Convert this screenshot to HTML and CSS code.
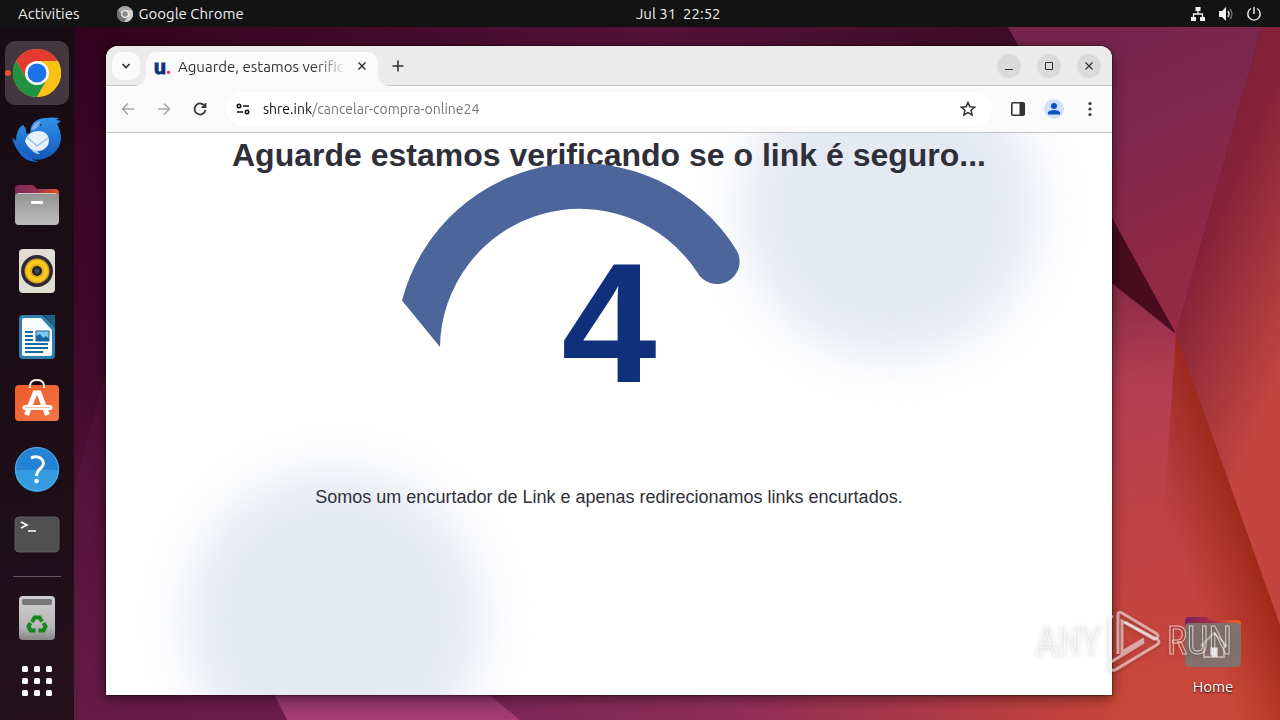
FILE: index.html
```html
<!DOCTYPE html>
<html lang="pt">
<head>
<meta charset="utf-8">
<meta name="viewport" content="width=device-width, initial-scale=1">
<title>Aguarde, estamos verificando</title>
<link rel="stylesheet" href="styles.css">
</head>
<body>
<svg class="wallpaper" viewBox="0 0 1280 720" preserveAspectRatio="none" aria-hidden="true">
  <defs>
    <linearGradient id="base" gradientUnits="userSpaceOnUse" x1="74" y1="0" x2="250" y2="720"><stop offset="0" stop-color="#31021f"/><stop offset=".5" stop-color="#430a2c"/><stop offset="1" stop-color="#74214f"/></linearGradient>
    <linearGradient id="top" x1="0" x2="1"><stop offset="0" stop-color="#33031f"/><stop offset=".55" stop-color="#541239"/><stop offset="1" stop-color="#380a24"/></linearGradient>
    <linearGradient id="plum" gradientUnits="userSpaceOnUse" x1="1100" y1="60" x2="1220" y2="330"><stop offset="0" stop-color="#77254f"/><stop offset="1" stop-color="#992b42"/></linearGradient>
    <linearGradient id="ember" gradientUnits="userSpaceOnUse" x1="1195" y1="260" x2="1310" y2="310"><stop offset="0" stop-color="#842239"/><stop offset="1" stop-color="#c24540"/></linearGradient>
    <linearGradient id="rose" gradientUnits="userSpaceOnUse" x1="1130" y1="290" x2="1150" y2="700"><stop offset="0" stop-color="#8d2c49"/><stop offset=".22" stop-color="#b43d50"/><stop offset="1" stop-color="#ca4839"/></linearGradient>
    <linearGradient id="fold" gradientUnits="userSpaceOnUse" x1="1182" y1="565" x2="1250" y2="541"><stop offset="0" stop-color="#9d2815" stop-opacity="0"/><stop offset="1" stop-color="#98240f" stop-opacity=".8"/></linearGradient>
    <linearGradient id="floor" x1="0" x2="1"><stop offset="0" stop-color="#7b2657"/><stop offset=".4" stop-color="#902e58"/><stop offset="1" stop-color="#c94539"/></linearGradient>
    <linearGradient id="pink" x1="0" y1="0" x2="0" y2="1"><stop offset="0" stop-color="#883066"/><stop offset="1" stop-color="#a43c75"/></linearGradient>
  </defs>
  <path fill="url(#base)" d="M0 0h1280v720H0z"/>
  <path fill="url(#top)" d="M106 27h1000v19H106z"/>
  <path fill="#5a1640" opacity=".4" d="M106 370 74 490v230h213v-40H106z"/>
  <path fill="url(#plum)" d="M1008 27h254l-86 307-64-116z"/>
  <path fill="url(#ember)" d="M1262 27h18v600l-104-293z"/>
  <path fill="#480c1c" d="M1112 218l64 116-64-51z"/>
  <path fill="url(#rose)" d="M1100 274l76 60 104 291v95h-180z"/>
  <path fill="url(#fold)" d="M1176 334l104 291v95h-130z"/>
  <path fill="url(#floor)" d="M490 695h622v25H520z"/>
  <path fill="url(#pink)" d="M267 680h205l48 40H287z"/>
</svg>

<header class="topbar">
  <div class="topbar-left">
    <button class="plain" type="button">Activities</button>
    <button class="plain app-menu" type="button">
      <svg width="16" height="16" viewBox="0 0 16 16" aria-hidden="true"><circle cx="8" cy="8" r="8" fill="#a8a8a8"/><path fill="#747474" d="M1 4a8 8 0 0 0 6 12l3-6-5-1z"/><path fill="#d0d0d0" d="M8 4h7a8 8 0 0 1-7 12l3-5z"/><circle cx="8" cy="8" r="3.4" fill="#888" stroke="#f0f0f0" stroke-width="1.2"/></svg>
      Google Chrome
    </button>
  </div>
  <button class="plain clock" type="button">Jul 31&nbsp; 22:52</button>
  <button class="plain status" type="button" aria-label="System">
    <svg width="16" height="16" viewBox="0 0 16 16" fill="#f2f2f2"><path d="M5.500 1h5v4h-5zM1 11h5v4H1zM10 11h5v4h-5z"/><path d="M8 5v3M3.500 11V8h9v3" fill="none" stroke="#f2f2f2" stroke-width="1.300"/></svg>
    <svg width="16" height="16" viewBox="0 0 16 16" fill="#f2f2f2"><path d="M1 5h3l4-4v14l-4-4H1z"/><path d="M10 5q2 3 0 6" fill="none" stroke="#ddd" stroke-width="1.400"/><path d="M12 3q4 5 0 10" fill="none" stroke="#777" stroke-width="1.300"/></svg>
    <svg width="16" height="16" viewBox="0 0 16 16" fill="none" stroke="#f2f2f2" stroke-width="1.400"><path d="M8 1v7M5 2.500a6.200 6.200 0 1 0 6 0"/></svg>
  </button>
</header>

<div class="workspace">
  <nav class="dock" aria-label="Dock">
    <button class="launcher active" type="button" aria-label="Google Chrome">
      <svg width="48" height="48" viewBox="0 0 48 48"><circle cx="24" cy="24" r="24" fill="#fbc116"/><path fill="#e33b2e" d="M3.200 12A24 24 0 0 1 44.800 12H24L13.600 30z"/><path fill="#229342" d="M3.200 12A24 24 0 0 0 24 48l10.400-18-20.800 0z"/><path fill="#fbc116" d="M24 12h20.800A24 24 0 0 1 24 48l10.400-18z"/><circle cx="24" cy="24" r="12" fill="#fff"/><circle cx="24" cy="24" r="9.500" fill="#1a73e8"/></svg>
    </button>
    <button class="launcher" type="button" aria-label="Thunderbird">
      <svg width="50" height="48" viewBox="0 -2 50 48"><defs><linearGradient id="tb" x1="0" y1="0" x2="0" y2="1"><stop offset="0" stop-color="#3193ea"/><stop offset="1" stop-color="#1458bb"/></linearGradient></defs><path fill="url(#tb)" d="M1 21q1 1 3 3 0-12 7-16 4 3 3 8l4 1q0-15 15-16 6-1 14 0l-3 2 5 1-4 3q4 6 4 15a24 23 0 0 1-47 4Q0 25 1 21z"/><path d="M8 26q4 15 19 19-14 1-21-11z" fill="#1a66ca"/><path fill="#8fb0e6" d="M19 13q3-8 10-9l-2 3q-2 6-8 6z"/><path fill="#e6f1fc" d="M13 24q3-10 13-10t11 9q0 9-10 11-11 0-14-10z"/><path d="M15 20l10 9 11-8" fill="none" stroke="#9dbfe2" stroke-width="1.500"/><path fill="#b4d6f8" d="M19 32q3 5 9 5-3-2-3-4z"/><circle cx="29" cy="8" r="1" fill="#123a7a"/></svg>
    </button>
    <button class="launcher" type="button" aria-label="Files">
      <svg width="46" height="42" viewBox="0 0 46 42"><defs><linearGradient id="fl"><stop offset="0" stop-color="#7b2a5c"/><stop offset=".5" stop-color="#9a3050"/><stop offset="1" stop-color="#e95420"/></linearGradient><linearGradient id="fg" x1="0" y1="0" x2="0" y2="1"><stop offset="0" stop-color="#929292"/><stop offset="1" stop-color="#bcbcbc"/></linearGradient></defs><path fill="url(#fl)" d="M1 5q0-4 4-4h13q2 0 3 2t3 2h17q4 0 4 4v8H1z"/><rect x="1" y="9" width="44" height="32" rx="4" fill="url(#fg)"/><path d="M4 9.500h38" stroke="#c4c4c4"/><rect x="17" y="17" width="12" height="3" rx="1" fill="#fff"/></svg>
    </button>
    <button class="launcher" type="button" aria-label="Rhythmbox">
      <svg width="38" height="46" viewBox="0 0 38 46"><rect x="1" y="1" width="36" height="44" rx="4" fill="#e2ddd3"/><circle cx="19" cy="23" r="16" fill="#2c2a38"/><circle cx="19" cy="23" r="12.500" fill="#d6a21f"/><circle cx="19" cy="23" r="11" fill="#f9c91e"/><circle cx="19" cy="23" r="7" fill="#e5ae13"/><circle cx="19" cy="23" r="5" fill="#21242b"/><circle cx="19" cy="23" r="2.500" fill="#454b58"/></svg>
    </button>
    <button class="launcher" type="button" aria-label="LibreOffice Writer">
      <svg width="38" height="46" viewBox="0 0 38 46"><path fill="#2f7fae" d="M5 1h20l12 12v28q0 4-4 4H5q-4 0-4-4V5q0-4 4-4z"/><path fill="#f8fbfc" d="M6 4h17l11 12v24q0 2-2 2H6q-2 0-2-2V6q0-2 2-2z"/><path fill="#22618c" d="M26 1h11v12z"/><path d="M7 18h8M7 22h8M7 26h8M7 30h23M7 34h23M7 38h18" stroke="#1769a0" stroke-width="2"/><rect x="18" y="17" width="13" height="10" fill="#80c8f0" stroke="#1769a0"/><path d="M18 27v-5l4-2 3 4 3-2 3 3v2z" fill="#17649b"/></svg>
    </button>
    <button class="launcher software" type="button" aria-label="Ubuntu Software">
      <svg width="46" height="44" viewBox="0 0 46 44"><defs><linearGradient id="sw" x1="0" y1="0" x2="1" y2="1"><stop offset="0" stop-color="#f05a24"/><stop offset="1" stop-color="#f17648"/></linearGradient></defs><rect x="1" y="7" width="44" height="36" rx="4" fill="url(#sw)"/><path d="M16 10V7q1-5 7-5t7 5v3" fill="none" stroke="#fbeee4" stroke-width="2"/><path d="M12.500 37l8.500-22h4l8.500 22" fill="none" stroke="#fff" stroke-width="5"/><path d="M11 29.500h25" stroke="#fff" stroke-width="5" stroke-linecap="round"/><path d="M11 29.500h25" stroke="#f6ac8c" stroke-width=".8"/></svg>
    </button>
    <button class="launcher" type="button" aria-label="Help">
      <svg width="46" height="46" viewBox="0 0 46 46"><circle cx="23" cy="23" r="22" fill="#2382d3"/><path fill="#349be0" d="M1 24h44a22 22 0 0 1-44 0z"/><circle cx="23" cy="23" r="21.500" fill="none" stroke="#52ade9"/><path d="M17 12q6-2.500 10 .5 5 4.500 0 9.500-4 3-4.500 8" fill="none" stroke="#fff" stroke-width="3"/><circle cx="22.500" cy="35" r="2.300" fill="#fff"/></svg>
    </button>
    <button class="launcher" type="button" aria-label="Terminal">
      <svg width="46" height="38" viewBox="0 0 46 38"><rect x="1" y="1" width="44" height="35" rx="4" fill="#505050" stroke="#5c5c5c"/><path d="M7 6l6 3-6 3M14 15h8" fill="none" stroke="#fff" stroke-width="1.600"/></svg>
    </button>
    <hr class="dock-rule">
    <button class="launcher" type="button" aria-label="Trash">
      <svg width="38" height="46" viewBox="0 0 38 46"><defs><linearGradient id="tr" x1="0" y1="0" x2="0" y2="1"><stop offset="0" stop-color="#cecece"/><stop offset=".7" stop-color="#b7b7b7"/><stop offset="1" stop-color="#858585"/></linearGradient></defs><rect x="1" y="1" width="36" height="44" rx="4" fill="url(#tr)"/><rect x="4" y="4" width="30" height="6" rx="2" fill="#777"/><g fill="none" stroke="#16871e" stroke-width="4"><path d="M14 27l2.500-4.500h5l2.500 4"/><path d="M25.500 28l2 3.500-2 4h-5"/><path d="M17.500 35.500h-5l-2-4 2-3.500"/></g></svg>
    </button>
    <button class="launcher apps" type="button" aria-label="Show Applications">
      <svg width="30" height="30" viewBox="0 0 30 30" fill="#fff"><g id="dots"><rect width="6" height="6" rx="1.500"/><rect x="12" width="6" height="6" rx="1.500"/><rect x="24" width="6" height="6" rx="1.500"/></g><use href="#dots" y="12"/><use href="#dots" y="24"/></svg>
    </button>
  </nav>

  <main class="desktop">
    <section class="window" aria-label="Google Chrome">
      <div class="titlebar">
        <button class="tab-search" type="button" aria-label="Search tabs"><svg width="10" height="10" viewBox="0 0 10 10" fill="none" stroke="#333" stroke-width="1.700"><path d="M1.500 3L5 6.500 8.500 3"/></svg></button>
        <div class="tab">
          <span class="favicon" aria-hidden="true">u<i>.</i></span>
          <span class="tab-title">Aguarde, estamos verific</span>
          <button class="tab-close" type="button" aria-label="Close tab"><svg width="8" height="8" viewBox="0 0 8 8" stroke="#333" stroke-width="1.500"><path d="M0.500 0.500l7 7M7.500 0.500l-7 7"/></svg></button>
        </div>
        <button class="new-tab" type="button" aria-label="New tab"><svg width="12" height="12" viewBox="0 0 12 12" stroke="#333" stroke-width="1.600"><path d="M6 0.500v11M0.500 6h11"/></svg></button>
        <div class="controls">
          <button type="button" aria-label="Minimize"><svg width="10" height="10" viewBox="0 0 10 10" stroke="#333"><path d="M1 8.500h8"/></svg></button>
          <button type="button" aria-label="Maximize"><svg width="10" height="10" viewBox="0 0 10 10" fill="none" stroke="#333"><path d="M1.500 1.500h7v7h-7z"/></svg></button>
          <button type="button" aria-label="Close"><svg width="10" height="10" viewBox="0 0 10 10" stroke="#333" stroke-width="1.200"><path d="M1.500 1.500l7 7M8.500 1.500l-7 7"/></svg></button>
        </div>
      </div>

      <div class="toolbar">
        <button class="tool" type="button" aria-label="Back"><svg width="14" height="14" viewBox="0 0 14 14" fill="none" stroke="#a5a5a5" stroke-width="1.600"><path d="M13 7H2M7 1.500L1.500 7 7 12.500"/></svg></button>
        <button class="tool" type="button" aria-label="Forward"><svg width="14" height="14" viewBox="0 0 14 14" fill="none" stroke="#a5a5a5" stroke-width="1.600"><path d="M1 7h11M7 1.500L12.500 7 7 12.500"/></svg></button>
        <button class="tool" type="button" aria-label="Reload"><svg width="14" height="14" viewBox="0 0 14 14" fill="none" stroke="#333" stroke-width="1.700"><path d="M12 4.500A5.500 5.500 0 1 0 12.500 8M12.500 1v4.200H8.500"/></svg></button>
        <div class="omnibox">
          <button class="omni-btn" type="button" aria-label="Site information"><svg width="14" height="12" viewBox="0 0 14 12" fill="none" stroke="#111" stroke-width="1.600"><circle cx="3" cy="3" r="1.700"/><path d="M7 3h6M1 9h6"/><circle cx="11" cy="9" r="1.700"/></svg></button>
          <input class="address" type="text" aria-label="Address" value="shre.ink/cancelar-compra-online24">
          <button class="omni-btn" type="button" aria-label="Bookmark this tab"><svg width="16" height="16" viewBox="0 0 16 16" fill="none" stroke="#333" stroke-width="1.500"><path d="M8 1.500l1.900 4.300 4.700.4-3.600 3.100 1.100 4.600L8 11.500l-4.100 2.400L5 9.300 1.400 6.200l4.700-.4z"/></svg></button>
        </div>
        <div class="tool-group">
          <button class="tool" type="button" aria-label="Side panel"><svg width="14" height="14" viewBox="0 0 14 14"><rect x=".8" y=".8" width="12.400" height="12.400" rx="1" fill="none" stroke="#333" stroke-width="1.600"/><path d="M8.500 1H13v12H8.500z" fill="#333"/></svg></button>
          <button class="tool" type="button" aria-label="Profile"><svg width="20" height="20" viewBox="0 0 20 20"><circle cx="10" cy="10" r="10" fill="#cfe1fb"/><g fill="#0b50c0"><circle cx="10" cy="7" r="3"/><path d="M4 15.500v-2q1-2.500 6-2.500t6 2.500v2z"/></g></svg></button>
          <button class="tool" type="button" aria-label="Menu"><svg width="4" height="16" viewBox="0 0 4 16" fill="#333"><circle cx="2" cy="2.500" r="1.600"/><circle cx="2" cy="8" r="1.600"/><circle cx="2" cy="13.500" r="1.600"/></svg></button>
        </div>
      </div>

      <article class="page">
        <div class="blob blob-top"></div>
        <div class="blob blob-bottom"></div>
        <h1>Aguarde estamos verificando se o link é seguro...</h1>
        <svg class="ring" width="368" height="368" viewBox="0 0 368 368" aria-hidden="true"><path fill="#4c659b" d="M6 136.500A184 184 0 0 1 341 87A22 22 0 0 1 301 108A140 140 0 0 0 44 183z"/></svg>
        <div class="count">4</div>
        <p>Somos um encurtador de Link e apenas redirecionamos links encurtados.</p>
      </article>
    </section>

    <button class="home" type="button">
      <svg width="58" height="52" viewBox="0 0 58 52" aria-hidden="true"><defs><linearGradient id="hf"><stop offset="0" stop-color="#7b1e62"/><stop offset=".4" stop-color="#a02c4c"/><stop offset="1" stop-color="#f0602a"/></linearGradient></defs><path fill="url(#hf)" d="M1 5q0-4 4-4h17l4 3h27q4 0 4 4v8H1z"/><rect x="1" y="7" width="56" height="44" rx="4" fill="#81706e"/><path d="M17 30l13-13 13 13M20 28v13h20V28M27 41v-9h6v9" fill="none" stroke="#bdb0ae" stroke-width="2"/><path d="M28 32h5v9h-5z" fill="#eee"/></svg>
      <span>Home</span>
    </button>

    <div class="watermark">
      <span>ANY</span>
      <svg width="54" height="62" viewBox="0 0 54 62" fill="none" stroke="#fff" stroke-opacity=".55" stroke-width="3" aria-hidden="true"><path d="M3 50V9q0-3 3-2"/><path d="M11 44V5q0-4 4-2l35 21q2 2 0 4l-3 1-32-18v31l22-13"/><path d="M3 52v5q0 4 5 3l43-26q2-2 0-4L18 12M4 52l33-20"/></svg>
      <span>RUN</span>
    </div>
  </main>
</div>
</body>
</html>
```
FILE: styles.css
```css
* { box-sizing: border-box; }

body {
  margin: 0;
  min-height: 100vh;
  display: flex;
  flex-direction: column;
  position: relative;
  overflow: hidden;
  background: #43092c;
  color: #fff;
  font-family: Ubuntu, "Noto Sans", sans-serif;
  font-size: 15px;
}

button {
  display: flex;
  align-items: center;
  justify-content: center;
  padding: 0;
  border: 0;
  background: none;
  color: inherit;
  font: inherit;
}

svg { display: block; flex: none; }

.wallpaper {
  position: absolute;
  inset: 0;
  width: 100%;
  height: 100%;
}

.topbar {
  position: relative;
  display: grid;
  grid-template-columns: 533fr auto 467fr;
  align-items: center;
  height: 27px;
  padding: 0 18px;
  background: #131313;
  color: #eee;
}
.topbar-left { display: flex; gap: 37px; }
.app-menu { gap: 6px; }
.status { justify-self: end; gap: 12px; }

.workspace {
  position: relative;
  flex: 1;
  display: flex;
}

.dock {
  width: 74px;
  display: flex;
  flex-direction: column;
  align-items: center;
  gap: 2px;
  padding: 14px 0 4px;
  background: rgba(20, 15, 18, .82);
}
.launcher {
  position: relative;
  width: 64px;
  height: 64px;
  border-radius: 10px;
}
.launcher.active { background: #443740; }
.launcher.active::before {
  content: "";
  position: absolute;
  left: 0;
  top: 29px;
  width: 6px;
  height: 6px;
  border-radius: 50%;
  background: #e95420;
}
.launcher.software { padding-bottom: 6px; }
.launcher.apps { height: 58px; }
.dock-rule {
  width: 48px;
  height: 1px;
  margin: 7px 0;
  border: 0;
  background: #655960;
}

.desktop {
  position: relative;
  flex: 1;
  display: flex;
  min-width: 0;
  padding: 19px 168px 25px 32px;
}

.window {
  flex: 1;
  display: flex;
  flex-direction: column;
  min-width: 0;
  overflow: hidden;
  border-radius: 12px 12px 0 0;
  background: #fff;
  box-shadow: 0 0 1px 1px rgba(0, 0, 0, .3), 0 3px 14px rgba(0, 0, 0, .5);
  color: #333;
}

.titlebar {
  display: flex;
  align-items: flex-start;
  height: 40px;
  padding: 6px 11px 0 6px;
  border-bottom: 1px solid #c4c4c4;
  background: #ebebeb;
}
.tab-search {
  width: 28px;
  height: 28px;
  margin-right: 6px;
  border-radius: 10px;
  background: #fafafa;
}
.tab {
  position: relative;
  display: flex;
  align-items: center;
  gap: 8px;
  width: 232px;
  height: 34px;
  padding: 0 8px 6px;
  border-radius: 10px 10px 0 0;
  background: #fafafa;
}
.tab::before,
.tab::after {
  content: "";
  position: absolute;
  bottom: 0;
  width: 10px;
  height: 10px;
}
.tab::before { left: -10px; background: radial-gradient(circle at 0 0, transparent 9px, #fafafa 10px); }
.tab::after { right: -10px; background: radial-gradient(circle at 100% 0, transparent 9px, #fafafa 10px); }
.favicon {
  width: 16px;
  color: #10307c;
  font: 900 21px/16px Lato, sans-serif;
  white-space: nowrap;
  -webkit-text-stroke: 1px;
}
.favicon i { color: #e8336d; font-style: normal; -webkit-text-stroke: 0; }
.tab-title {
  flex: 1;
  min-width: 0;
  overflow: hidden;
  white-space: nowrap;
  -webkit-mask-image: linear-gradient(90deg, #000 82%, transparent);
  mask-image: linear-gradient(90deg, #000 82%, transparent);
}
.tab-close { width: 16px; height: 16px; }
.new-tab { width: 28px; height: 28px; margin-left: 6px; }
.controls { display: flex; gap: 16px; margin: 2px 0 0 auto; }
.controls button {
  width: 24px;
  height: 24px;
  border-radius: 50%;
  background: #dbdbdb;
}

.toolbar {
  display: flex;
  align-items: center;
  height: 47px;
  padding: 0 4px;
  border-bottom: 1px solid #c4c4c4;
  background: #fafafa;
}
.tool { width: 36px; height: 36px; flex: none; }
.tool-group { display: flex; }
.omnibox {
  flex: 1;
  display: flex;
  align-items: center;
  min-width: 0;
  height: 34px;
  margin: 0 8px;
  padding: 0 8px 0 1px;
  border-radius: 17px;
  background: #fff;
}
.omni-btn { width: 32px; height: 32px; flex: none; }
.address {
  flex: 1;
  min-width: 0;
  padding: 0 4px;
  border: 0;
  outline: 0;
  background: linear-gradient(90deg, #111 53px, #707070 53px);
  -webkit-background-clip: text;
  background-clip: text;
  color: transparent;
  font: 14px Ubuntu, "Noto Sans", sans-serif;
}

.page {
  position: relative;
  flex: 1;
  overflow: hidden;
  background: #fff;
  color: #2f2f3a;
  font-family: "Liberation Sans", Arial, sans-serif;
  text-align: center;
}
.page h1 {
  position: relative;
  margin: 2px 0 0;
  font-size: 32px;
  line-height: 40px;
}
.ring {
  position: absolute;
  top: 31px;
  left: calc(50% - 213px);
}
.count {
  position: relative;
  margin-top: 48px;
  color: #11307b;
  font-size: 171px;
  font-weight: bold;
  line-height: 200px;
}
.page p {
  position: relative;
  margin: 62px 0 0;
  font-size: 18px;
  line-height: 24px;
}
.blob {
  position: absolute;
  width: 300px;
  height: 300px;
  border-radius: 50%;
  background: #e5e9f2;
  filter: blur(24px);
}
.blob-top { top: -75px; right: 72px; }
.blob-bottom { bottom: -75px; left: 79px; }

.home {
  position: absolute;
  right: 38px;
  bottom: 25px;
  flex-direction: column;
  gap: 10px;
  text-shadow: 0 1px 2px #000;
}

.watermark {
  position: absolute;
  right: 48px;
  bottom: 48px;
  display: flex;
  align-items: center;
  gap: 6px;
  filter: drop-shadow(0 1px 2px rgba(0, 0, 0, .35));
  color: transparent;
  font: 38px/62px "Ubuntu Condensed", "Roboto Condensed", "Open Sans Condensed", sans-serif;
  -webkit-text-stroke: 1px rgba(255, 255, 255, .65);
  pointer-events: none;
}
```
